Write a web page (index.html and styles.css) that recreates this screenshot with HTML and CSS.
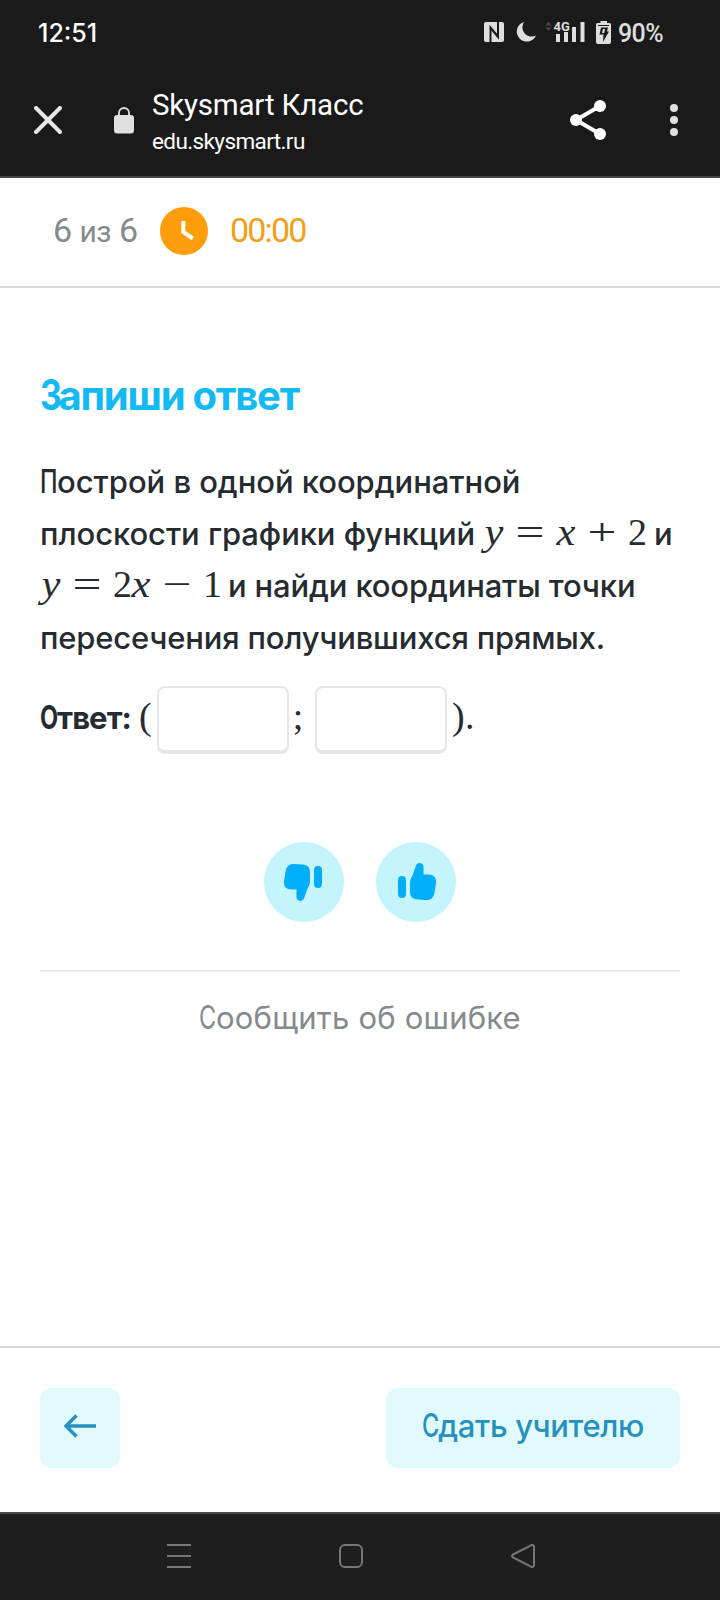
FILE: index.html
```html
<!DOCTYPE html>
<html lang="ru">
<head>
  <meta charset="UTF-8">
  <title>Skysmart Класс</title>
  <meta name="viewport" content="width=device-width, initial-scale=1">
  <link rel="stylesheet" href="styles.css">
</head>
<body>
  <div class="status-bar">
    <span class="time">12:51</span>
    <svg class="status-icons" width="130" height="26" viewBox="482 20 130 26">
      <!-- nfc -->
      <rect x="484" y="22" width="20" height="20" rx="2" fill="#dedede"/>
      <path d="M490.500 42V27.500l7 8.500" fill="none" stroke="#1a1a1a" stroke-width="2"/>
      <path d="M498 22v15l-6-7.500" fill="none" stroke="#1a1a1a" stroke-width="2"/>
      <!-- do not disturb -->
      <path d="M524 22a10 10 0 1 0 12 13.500A9.300 9.300 0 0 1 524 22z" fill="#dedede"/>
      <!-- signal -->
      <path d="M545.500 25.500l3-4 3 4zM545.500 27.500l3 3.500 3-3.500z" fill="#484848"/>
      <path d="M556 34h4v8h-4zM564 32h4v10h-4zM572 27h4v15h-4zM580.500 22h4v20h-4z" fill="#dedede"/>
      <text class="net" x="553.500" y="31">4G</text>
      <!-- battery -->
      <path d="M600.500 21h6.500v2h2.500a1.500 1.500 0 0 1 1.500 1.500V42a2 2 0 0 1-2 2h-11a2 2 0 0 1-2-2V24.500a1.500 1.500 0 0 1 1.500-1.500h3z" fill="#dedede"/>
      <path d="M598 25.500h11" stroke="#1a1a1a" stroke-width="1"/>
      <path d="M601 27.500h7l-1 4h2l-6 10.500 .5-7.500h-4z" fill="#1a1a1a"/>
      <path d="M603 29h2l-.8 4h-2.200z" fill="#dedede"/>
    </svg>
    <span class="charge">90%</span>
  </div>

  <div class="browser-bar">
    <svg class="close" width="28" height="28" viewBox="0 0 28 28"><path d="M2 2l24 24M26 2L2 26" stroke="#e6e6e6" stroke-width="4" stroke-linecap="round"/></svg>
    <svg class="lock" width="20" height="27" viewBox="0 0 20 27"><rect y="8" width="20" height="18.500" rx="3" fill="#e0e0e0"/><path d="M5 9V6a5 5 0 0 1 10 0v3" fill="none" stroke="#e0e0e0" stroke-width="1.800"/></svg>
    <div class="site">
      <div class="site-title">Skysmart Класс</div>
      <div class="site-url">edu.skysmart.ru</div>
    </div>
    <svg class="share" width="36" height="40" viewBox="0 0 36 40"><path d="M30 6L6 20l24 14" fill="none" stroke="#fff" stroke-width="4"/><g fill="#fff"><circle cx="30" cy="6" r="6"/><circle cx="6" cy="20" r="6"/><circle cx="30" cy="34" r="6"/></g></svg>
    <svg class="dots" width="8" height="32" viewBox="0 0 8 32" fill="#e0e0e0"><circle cx="4" cy="4" r="4"/><circle cx="4" cy="16" r="4"/><circle cx="4" cy="28" r="4"/></svg>
  </div>

  <div class="progress">
    <span class="step">6 <span class="of">из</span> 6</span>
    <svg class="clock" width="48" height="48" viewBox="0 0 48 48"><circle cx="24" cy="24" r="24" fill="#ff9d0a"/><path d="M23.300 14v11l9.500 6.500" fill="none" stroke="#fff" stroke-width="4"/></svg>
    <span class="timer">00:00</span>
  </div>

  <main class="task">
    <h1><span class="cap">З</span>апиши ответ</h1>
    <div class="question">
      <div class="line line1"><span class="cap">П</span>острой в одной координатной</div>
      <div class="line line2"><span class="text">плоскости графики функций</span><span class="math"><i>y</i><b>=</b><i>x</i><b>+</b><u>2</u></span><span class="text">и</span></div>
      <div class="line line3"><span class="math"><i>y</i><b>=</b><u>2</u><i>x</i><b>−</b><u>1</u></span><span class="text">и найди координаты точки</span></div>
      <div class="line line4">пересечения получившихся прямых.</div>
    </div>
    <div class="answer">
      <strong><span class="cap">О</span>твет:</strong>
      <span class="paren open">(</span>
      <input class="field" type="text">
      <span class="semi">;</span>
      <input class="field" type="text">
      <span class="paren">)</span>
      <span class="dot">.</span>
    </div>
    <div class="votes">
      <button class="vote"><svg width="80" height="80" viewBox="0 0 80 80"><g transform="rotate(180 40 40)"><path class="thumb" d="M26 38v14"/><path class="hand" d="M34 41c0-3 1-5 2.500-7.500L40 23.500c1.500-3.800 7.500-3 7.500 1.200V32.500h5c5 0 8 3 7.500 8l-1.500 10c-.8 5-3.500 7.500-8 7.500l-9-.5c-5-.3-7.500-3-7.500-8z"/></g></svg></button>
      <button class="vote"><svg width="80" height="80" viewBox="0 0 80 80"><path class="thumb" d="M26 38v14"/><path class="hand" d="M34 41c0-3 1-5 2.500-7.500L40 23.500c1.500-3.800 7.500-3 7.500 1.200V32.500h5c5 0 8 3 7.500 8l-1.500 10c-.8 5-3.500 7.500-8 7.500l-9-.5c-5-.3-7.500-3-7.500-8z"/></svg></button>
    </div>
    <a class="report"><span class="cap">С</span>ообщить об ошибке</a>
  </main>

  <div class="actions">
    <button class="back"><svg width="32" height="24" viewBox="0 0 32 24"><path d="M32 12H2M12.500 1.500L2 12l10.500 10.500" fill="none" stroke="#2790bb" stroke-width="3.400"/></svg></button>
    <button class="submit"><span class="cap">С</span>дать учителю</button>
  </div>

  <div class="nav-bar">
    <svg width="24" height="24" viewBox="0 0 24 24"><path d="M0 1h24M0 12h24M0 23h24"/></svg>
    <svg width="24" height="24" viewBox="0 0 24 24"><rect x="1" y="1" width="22" height="22" rx="5"/></svg>
    <svg width="24" height="24" viewBox="0 0 24 24"><path d="M2 10.500L20 1.300q3-1 3 2v17.400q0 3-3 2L2 13.500q-2-1.500 0-3z"/></svg>
  </div>
</body>
</html>
```
FILE: styles.css
```css
* {
  box-sizing: border-box;
}
body {
  margin: 0;
  height: 1600px;
  display: flex;
  flex-direction: column;
  background-color: #fff;
  color: #262b30;
  font-family: Inter, "Noto Sans", sans-serif;
  font-weight: 500;
  white-space: nowrap;
}
button {
  border: none;
  padding: 0;
  font: inherit;
}
svg {
  display: block;
  flex: none;
}

/* phone status bar */
.status-bar {
  height: 64px;
  background-color: #1a1a1a;
  color: #fff;
  display: flex;
  align-items: center;
  padding: 0 56px 0 38px;
}
.time {
  font-size: 25px;
  padding-top: 2px;
}
.status-icons {
  margin-left: auto;
  margin-top: 2px;
}
.net {
  font: 700 13px Roboto, sans-serif;
  fill: #dedede;
  stroke: #1a1a1a;
  stroke-width: 2px;
  paint-order: stroke;
}
.charge {
  width: 46px;
  margin-left: 6px;
  padding-top: 2px;
  font: 500 25px Roboto, sans-serif;
  color: #dedede;
  letter-spacing: -0.6px;
}

/* browser toolbar */
.browser-bar {
  height: 114px;
  background-color: #1a1a1a;
  border-bottom: 2px solid #444;
  color: #fff;
  display: flex;
  align-items: center;
  padding: 0 42px 0 34px;
  font-family: Roboto, sans-serif;
  font-weight: 400;
}
.lock {
  margin-left: 52px;
}
.site {
  margin-left: 18px;
  padding-top: 4px;
}
.site-title {
  font-size: 29.5px;
  line-height: 38px;
  letter-spacing: -0.2px;
}
.site-url {
  font-size: 22.5px;
  line-height: 34px;
  letter-spacing: -0.6px;
}
.share {
  margin-left: auto;
}
.dots {
  margin-left: 64px;
}

/* step and timer */
.progress {
  height: 110px;
  border-bottom: 2px solid #d8d8d8;
  display: flex;
  align-items: center;
  padding: 0 53px 4px;
  font-family: Roboto, sans-serif;
  font-size: 34px;
  font-weight: 400;
}
.step {
  width: 84px;
  color: #858a8c;
  letter-spacing: -0.5px;
}
.of {
  font-size: 30px;
}
.clock {
  margin-left: 23px;
  margin-top: 2px;
}
.timer {
  margin-left: 22px;
  color: #eda11c;
  letter-spacing: -1.8px;
}

/* narrow capital letters */
.cap {
  display: inline-block;
  transform: scale(0.76, 1.06);
  transform-origin: left 78%;
  margin-right: -6px;
}

.task {
  flex: 1;
  padding: 80px 40px 0;
}
h1 {
  margin: 0;
  font-size: 40px;
  line-height: 56px;
  font-weight: 700;
  letter-spacing: -1.25px;
  color: #12b9f2;
}
h1 .cap {
  transform: scale(0.85, 1.06);
}
.question {
  margin-top: 32px;
  font-size: 31px;
  line-height: 52px;
  letter-spacing: -0.05px;
}
.line {
  height: 52px;
  display: flex;
  align-items: baseline;
}
.line2 {
  letter-spacing: -0.07px;
}
.line3 {
  letter-spacing: -0.15px;
}
.line4 {
  letter-spacing: -0.19px;
}
.math {
  display: flex;
  align-items: baseline;
  font: 38px/48px "Liberation Serif", serif;
  letter-spacing: 0;
}
.math i,
.math b,
.math u {
  font-weight: 400;
  text-decoration: none;
  text-align: center;
}
.math i {
  width: 20px;
  transform: scaleX(1.12);
}
.math b {
  width: 52px;
  transform: scaleX(1.35);
}
.math u {
  width: 18px;
}
.line2 .math {
  margin: 0 8px 0 9px;
}
.line3 .math {
  margin-left: 1px;
  margin-right: 7px;
}

.answer {
  height: 68px;
  margin-top: 22px;
  display: flex;
  font-size: 31px;
  line-height: 63px;
}
.answer strong {
  width: 99px;
  font-weight: 700;
  letter-spacing: -0.9px;
}
.paren,
.semi,
.dot {
  font: 38px/60px "Liberation Serif", serif;
}
.field {
  width: 132px;
  height: 68px;
  border: 2px solid #e6e6e6;
  border-bottom-width: 4px;
  border-radius: 8px;
}
.open {
  width: 18px;
}
.semi {
  width: 26px;
  padding-right: 8px;
  text-align: center;
}
.field + .paren {
  width: 13px;
  margin-left: 5px;
}

.votes {
  height: 130px;
  margin-top: 88px;
  border-bottom: 2px solid #ebebeb;
  display: flex;
  justify-content: center;
  gap: 32px;
}
.vote {
  width: 80px;
  height: 80px;
  border-radius: 50%;
  background-color: #c4f5fe;
}
.hand {
  fill: #00aefa;
}
.thumb {
  stroke: #00aefa;
  stroke-width: 8px;
  stroke-linecap: round;
}
.report {
  display: block;
  margin-top: 20px;
  text-align: center;
  font-size: 31px;
  line-height: 52px;
  font-weight: 400;
  letter-spacing: 0.2px;
  color: #858a8c;
}

.actions {
  height: 166px;
  border-top: 2px solid #d8d8d8;
  padding: 40px 40px 0;
  display: flex;
  justify-content: space-between;
}
.back,
.submit {
  height: 80px;
  border-radius: 12px;
  background-color: #e1fafe;
}
.back {
  width: 80px;
  display: flex;
  align-items: center;
  justify-content: center;
  padding-bottom: 4px;
}
.submit {
  width: 294px;
  padding-bottom: 5px;
  font-size: 31px;
  letter-spacing: -0.35px;
  color: #2790bb;
}

/* phone navigation */
.nav-bar {
  height: 88px;
  border-top: 2px solid #484848;
  background-color: #1f1f1f;
  display: flex;
  gap: 148px;
  padding: 30px 0 0 167px;
}
.nav-bar svg {
  fill: none;
  stroke: #777;
  stroke-width: 2px;
}
```
